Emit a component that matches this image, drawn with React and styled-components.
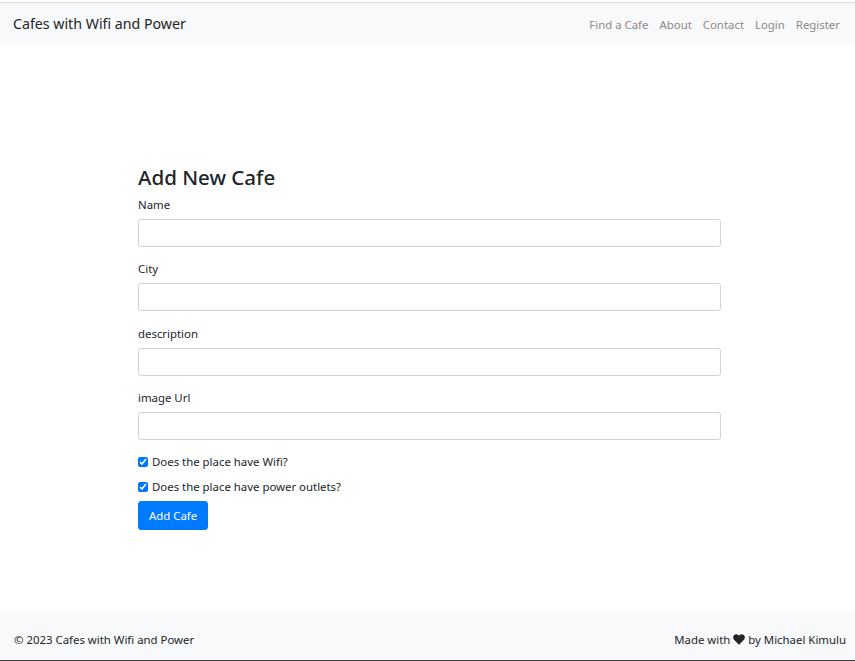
import styled, { createGlobalStyle } from "styled-components";

// Add-cafe form page: navbar, a centred form, footer pinned at the bottom

const GlobalStyle = createGlobalStyle`
    html, body {
        margin: 0;
        padding: 0;
        background: #ffffff;
    }
    body {
        font-family: "Noto Sans", "Open Sans", sans-serif;
        font-size: 11.4px;
        line-height: 18px;
        color: #212529;
    }
    * {
        box-sizing: border-box;
    }
`

const Page = styled.div`
    height: 661px;
    display: flex;
    flex-direction: column;
    padding-top: 2px;
`

const Navbar = styled.nav`
    height: 43px;
    border-top: 1px solid #dcdfe3;
    background-color: #f8f9fa;
    display: flex;
    align-items: center;
    justify-content: space-between;
    padding: 0 15px 0 13px;
`

const Brand = styled.div`
    font-size: 14.2px;
    color: #212529;
    margin-top: -1px;
`

const NavLinks = styled.ul`
    margin: 0;
    padding: 0;
    list-style: none;
    display: flex;
    gap: 11px;
`

const NavLink = styled.li`
    font-size: 11.4px;
    color: #8a8a8a;
    margin-top: 1px;
`

const Main = styled.main`
    flex: 1;
    padding: 117px 0 0 138px;
`

const Form = styled.form`
    width: 583px;
`

const Title = styled.h2`
    margin: 0 0 3px;
    font-size: 20.5px;
    font-weight: 500;
    line-height: 31px;
    color: #212529;
`

const Group = styled.div`
    margin-bottom: 13.3px;
`

const Label = styled.label`
    display: block;
    margin-bottom: 5px;
`

const Input = styled.input`
    display: block;
    width: 100%;
    height: 28px;
    border: 1px solid #ced4da;
    border-radius: 3px;
    background: #ffffff;
    outline: none;
`

const Check = styled.label`
    display: flex;
    align-items: center;
    gap: 4px;
    height: 18px;
    margin-bottom: ${props => props.last ? "5px" : "7px"};
`

const Box = styled.input`
    margin: 0;
    width: 10px;
    height: 10px;
    accent-color: #0075ff;
`

const Button = styled.button`
    height: 29px;
    padding: 0 10px;
    border: 1px solid #007bff;
    border-radius: 3px;
    background-color: #007bff;
    color: #ffffff;
    font-family: inherit;
    font-size: 11.4px;
`

const Footer = styled.footer`
    height: 48px;
    background-color: #f8f9fa;
    border-bottom: 1px solid #3f3f33;
    display: flex;
    align-items: center;
    justify-content: space-between;
    padding: 7px 9px 0 14px;
`

const Heart = styled.svg`
    width: 12px;
    height: 11px;
    vertical-align: -1px;
`

const App = () => {
    return (
        <Page>
            <GlobalStyle />
            <Navbar>
                <Brand>Cafes with Wifi and Power</Brand>
                <NavLinks>
                    <NavLink>Find a Cafe</NavLink>
                    <NavLink>About</NavLink>
                    <NavLink>Contact</NavLink>
                    <NavLink>Login</NavLink>
                    <NavLink>Register</NavLink>
                </NavLinks>
            </Navbar>
            <Main>
                <Form onSubmit={e => e.preventDefault()}>
                    <Title>Add New Cafe</Title>
                    <Group>
                        <Label>Name</Label>
                        <Input type="text" />
                    </Group>
                    <Group>
                        <Label>City</Label>
                        <Input type="text" />
                    </Group>
                    <Group>
                        <Label>description</Label>
                        <Input type="text" />
                    </Group>
                    <Group>
                        <Label>image Url</Label>
                        <Input type="text" />
                    </Group>
                    <Check>
                        <Box type="checkbox" defaultChecked />
                        Does the place have Wifi?
                    </Check>
                    <Check last>
                        <Box type="checkbox" defaultChecked />
                        Does the place have power outlets?
                    </Check>
                    <Button type="submit">Add Cafe</Button>
                </Form>
            </Main>
            <Footer>
                <span>© 2023 Cafes with Wifi and Power</span>
                <span>
                    Made with{" "}
                    <Heart viewBox="0 0 24 22">
                        <path d="M12 21.5 L2.5 12 C-0.5 9 -0.5 4 2.5 1.8 C5.5 -0.5 9.5 0.3 12 3.5 C14.5 0.3 18.5 -0.5 21.5 1.8 C24.5 4 24.5 9 21.5 12 Z" fill="#212529" />
                    </Heart>{" "}
                    by Michael Kimulu
                </span>
            </Footer>
        </Page>
    )
}

export default App
